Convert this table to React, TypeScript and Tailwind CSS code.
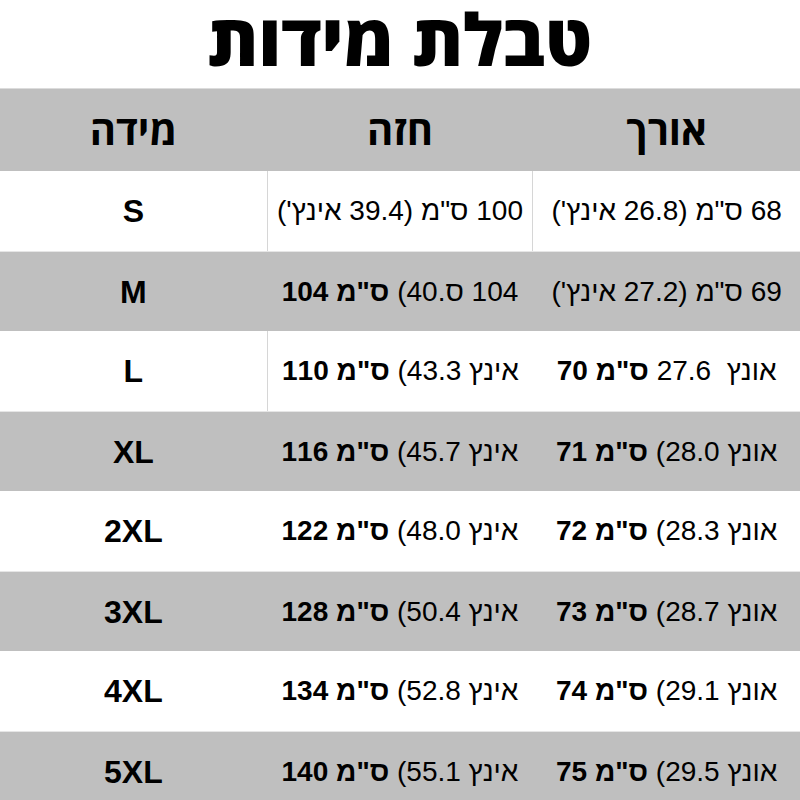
import type { ReactNode } from "react";

type Row = {
  size: string;
  chest: ReactNode;
  length: ReactNode;
  gray: boolean;
  lineLeft?: boolean;
  lineRight?: boolean;
};

const rows: Row[] = [
  {
    size: "S",
    chest: <>100 ס"מ (39.4 אינץ')</>,
    length: <>68 ס"מ (26.8 אינץ')</>,
    gray: false,
    lineLeft: true,
    lineRight: true,
  },
  {
    size: "M",
    chest: (
      <>
        104 ס.40) <b>ס"מ 104</b>
      </>
    ),
    length: <>69 ס"מ (27.2 אינץ')</>,
    gray: true,
  },
  {
    size: "L",
    chest: (
      <>
        אינץ 43.3) <b>ס"מ 110</b>
      </>
    ),
    length: (
      <>
        אונץ{"\u00A0"} 27.6 <b>ס"מ 70</b>
      </>
    ),
    gray: false,
    lineRight: true,
  },
  {
    size: "XL",
    chest: (
      <>
        אינץ 45.7) <b>ס"מ 116</b>
      </>
    ),
    length: (
      <>
        אונץ 28.0) <b>ס"מ 71</b>
      </>
    ),
    gray: true,
  },
  {
    size: "2XL",
    chest: (
      <>
        אינץ 48.0) <b>ס"מ 122</b>
      </>
    ),
    length: (
      <>
        אונץ 28.3) <b>ס"מ 72</b>
      </>
    ),
    gray: false,
  },
  {
    size: "3XL",
    chest: (
      <>
        אינץ 50.4) <b>ס"מ 128</b>
      </>
    ),
    length: (
      <>
        אונץ 28.7) <b>ס"מ 73</b>
      </>
    ),
    gray: true,
  },
  {
    size: "4XL",
    chest: (
      <>
        אינץ 52.8) <b>ס"מ 134</b>
      </>
    ),
    length: (
      <>
        אונץ 29.1) <b>ס"מ 74</b>
      </>
    ),
    gray: false,
  },
  {
    size: "5XL",
    chest: (
      <>
        אינץ 55.1) <b>ס"מ 140</b>
      </>
    ),
    length: (
      <>
        אונץ 29.5) <b>ס"מ 75</b>
      </>
    ),
    gray: true,
  },
];

export default function App() {
  return (
    <div className="w-[800px] h-[800px] overflow-hidden bg-white text-black font-['Liberation_Sans','DejaVu_Sans',sans-serif]">
      <div className="h-[88px] flex items-start justify-center">
        <h1
          dir="rtl"
          className="font-['Open_Sans','DejaVu_Sans',sans-serif] font-extrabold text-[72px] leading-[76px]"
        >
          טבלת מידות
        </h1>
      </div>

      <div className="border-t border-[#dcdcdc]">
        <div className="grid grid-cols-3 h-[82px] bg-[#bfbfbf] items-center text-center font-['Open_Sans','DejaVu_Sans',sans-serif] font-bold text-[40px]">
          <div dir="rtl">מידה</div>
          <div dir="rtl">חזה</div>
          <div dir="rtl">אורך</div>
        </div>

        {rows.map((r) => (
          <div
            key={r.size}
            className={`grid grid-cols-3 h-[80px] text-center ${
              r.gray ? "bg-[#bfbfbf] border-t border-[#e6e6e6]" : "bg-white"
            }`}
          >
            <div className="flex items-center justify-center font-bold text-[32px]">
              {r.size}
            </div>
            <div
              dir="rtl"
              className={`flex items-center justify-center text-[28px] whitespace-nowrap ${
                r.lineLeft ? "border-r border-[#d6d6d6]" : ""
              } ${r.lineRight ? "border-l border-[#d6d6d6]" : ""}`}
            >
              <span>{r.chest}</span>
            </div>
            <div
              dir="rtl"
              className="flex items-center justify-center text-[28px] whitespace-nowrap"
            >
              <span>{r.length}</span>
            </div>
          </div>
        ))}
      </div>
    </div>
  );
}
